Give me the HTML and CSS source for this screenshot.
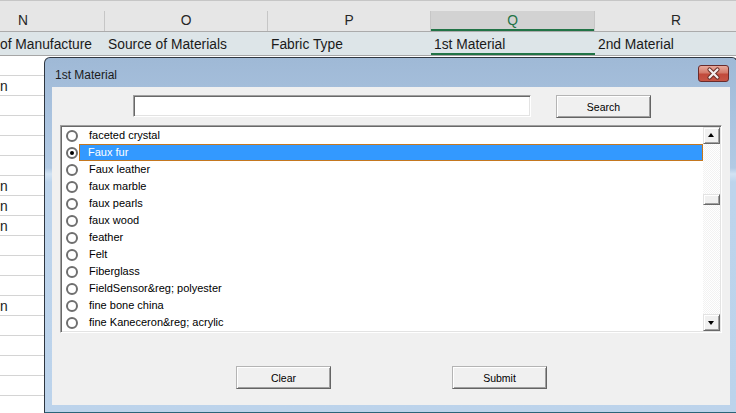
FILE: index.html
```html
<!DOCTYPE html>
<html lang="en">
<head>
    <meta charset="UTF-8">
    <meta name="viewport" content="width=device-width, initial-scale=1.0">
    <title>1st Material</title>
    <link rel="stylesheet" href="styles.css">
</head>
<body>
    <!-- Hoja de cálculo de fondo -->
    <div class="sheet">
        <div class="top-strip"></div>
        <div class="col-heads">
            <div class="col-head col-n">N</div>
            <div class="col-head">O</div>
            <div class="col-head">P</div>
            <div class="col-head active">Q</div>
            <div class="col-head">R</div>
        </div>
        <div class="title-row">
            <div class="cell col-n">of Manufacture</div>
            <div class="cell">Source of Materials</div>
            <div class="cell">Fabric Type</div>
            <div class="cell active">1st Material</div>
            <div class="cell">2nd Material</div>
        </div>
        <div class="grid-row"></div>
        <div class="grid-row">n</div>
        <div class="grid-row"></div>
        <div class="grid-row"></div>
        <div class="grid-row"></div>
        <div class="grid-row"></div>
        <div class="grid-row">n</div>
        <div class="grid-row">n</div>
        <div class="grid-row">n</div>
        <div class="grid-row"></div>
        <div class="grid-row"></div>
        <div class="grid-row"></div>
        <div class="grid-row">n</div>
        <div class="grid-row"></div>
        <div class="grid-row"></div>
        <div class="grid-row"></div>
        <div class="grid-row"></div>
        <div class="grid-row"></div>
    </div>

    <!-- Ventana del formulario -->
    <div class="dialog">
        <div class="titlebar">
            <span class="title">1st Material</span>
            <button class="close-btn" aria-label="Close">
                <svg width="31" height="17" viewBox="0 0 31 17">
                    <path d="M11.5 4.5 L19.5 12.5 M19.5 4.5 L11.5 12.5" stroke="#6b2e26" stroke-width="4.2" stroke-linecap="round"/>
                    <path d="M11.5 4.5 L19.5 12.5 M19.5 4.5 L11.5 12.5" stroke="#f4f0f0" stroke-width="2.2" stroke-linecap="round"/>
                </svg>
            </button>
        </div>
        <div class="client">
            <div class="search-row">
                <input class="search-input" type="text">
                <button class="btn">Search</button>
            </div>

            <div class="listbox">
                <ul class="options">
                    <li class="option"><span class="radio"></span><span class="label">faceted crystal</span></li>
                    <li class="option selected"><span class="radio"></span><span class="label">Faux fur</span></li>
                    <li class="option"><span class="radio"></span><span class="label">Faux leather</span></li>
                    <li class="option"><span class="radio"></span><span class="label">faux marble</span></li>
                    <li class="option"><span class="radio"></span><span class="label">faux pearls</span></li>
                    <li class="option"><span class="radio"></span><span class="label">faux wood</span></li>
                    <li class="option"><span class="radio"></span><span class="label">feather</span></li>
                    <li class="option"><span class="radio"></span><span class="label">Felt</span></li>
                    <li class="option"><span class="radio"></span><span class="label">Fiberglass</span></li>
                    <li class="option"><span class="radio"></span><span class="label">FieldSensor&amp;reg; polyester</span></li>
                    <li class="option"><span class="radio"></span><span class="label">fine bone china</span></li>
                    <li class="option"><span class="radio"></span><span class="label">fine Kaneceron&amp;reg; acrylic</span></li>
                </ul>
                <div class="scrollbar">
                    <div class="scroll-btn up"></div>
                    <div class="track"><div class="thumb"></div></div>
                    <div class="scroll-btn down"></div>
                </div>
            </div>

            <div class="button-row">
                <button class="btn">Clear</button>
                <button class="btn">Submit</button>
            </div>
        </div>
    </div>
</body>
</html>
```

FILE: styles.css
```css
body {
    margin: 0;
    width: 736px;
    height: 413px;
    overflow: hidden;
    position: relative;
    background: #fff;
    font-family: "Liberation Sans", Arial, sans-serif;
}

/* Hoja */
.sheet {
    width: 100%;
}

.top-strip {
    height: 11px;
    background: #e6e6e6;
    border-top: 1px solid #c6c6c6;
    box-sizing: border-box;
}

.col-heads {
    display: flex;
    height: 21px;
    background: #e6e6e6;
    border-bottom: 1px solid #ababab;
    box-sizing: border-box;
}

.col-head {
    flex: 0 0 163px;
    box-sizing: border-box;
    border-right: 1px solid #c6c6c6;
    text-align: center;
    font-size: 13.8px;
    line-height: 20px;
    color: #262626;
}

.col-n {
    margin-left: -58px;
}

.col-head.active {
    flex-basis: 164px;
    background: #d2d2d2;
    color: #217346;
    box-shadow: inset 0 -2px #217346;
}

.title-row {
    display: flex;
    height: 24px;
    background: #dde5e8;
    border-bottom: 1px solid #a6a6a6;
    box-sizing: border-box;
}

.cell {
    flex: 0 0 163px;
    box-sizing: border-box;
    padding-left: 3px;
    padding-top: 1px;
    font-size: 13.8px;
    line-height: 23px;
    white-space: nowrap;
    color: #1a1a1a;
}

.cell.col-n {
    padding-left: 58px;
}

.cell.active {
    flex-basis: 164px;
    box-shadow: inset 0 -2px #217346;
}

.grid-row {
    height: 20px;
    box-sizing: border-box;
    border-bottom: 1px solid #d4d4d4;
    font-size: 13.8px;
    line-height: 21px;
    color: #1a1a1a;
}

/* Ventana */
.dialog {
    position: absolute;
    left: 44px;
    top: 57px;
    width: 694px;
    height: 356px;
    box-sizing: border-box;
    border: 1px solid #2e3640;
    border-bottom-color: #2a6478;
    border-radius: 6px 6px 0 0;
    padding: 0 7px 7px;
    display: flex;
    flex-direction: column;
    background: linear-gradient(to bottom, #9fb9d6 0, #aac3df 60px, #b2cae4 110px, #d2e3f3 116px, #bdd4ec 124px, #bcd3eb 100%);
}

.titlebar {
    height: 29px;
    flex: 0 0 29px;
    display: flex;
    align-items: center;
    justify-content: space-between;
}

.title {
    padding-left: 3px;
    font-size: 12px;
    color: #1b1b1b;
    margin-top: 4px;
}

.close-btn {
    width: 31px;
    height: 17px;
    padding: 0;
    margin-right: 1px;
    margin-top: 1px;
    border: 1px solid #6a2b2b;
    border-radius: 3px;
    background: linear-gradient(to bottom, #e9aa9c 0, #d37a6a 45%, #c14a3b 55%, #c65545 100%);
    display: flex;
    align-items: center;
    justify-content: center;
    box-sizing: border-box;
}

.close-btn svg {
    display: block;
    margin: -1px;
}

.client {
    flex: 1;
    background: #f0f0f0;
    padding-top: 8px;
    font-size: 11px;
    color: #000;
}

.search-row {
    display: flex;
    gap: 25px;
    margin-left: 81px;
}

.search-input {
    width: 398px;
    height: 22px;
    box-sizing: border-box;
    margin: 0;
    padding: 0 3px;
    background: #fff;
    border: 1px solid;
    border-color: #a0a0a0 #fff #fff #a0a0a0;
    box-shadow: inset 1px 1px #696969, inset -1px -1px #e3e3e3;
    outline: none;
}

.btn {
    width: 95px;
    height: 23px;
    box-sizing: border-box;
    padding: 0;
    background: #f0f0f0;
    border: 1px solid;
    border-color: #b4b4b4 #646464 #646464 #b4b4b4;
    box-shadow: inset 1px 1px #fff, inset -1px -1px #a0a0a0;
    font-family: "Liberation Sans", Arial, sans-serif;
    font-size: 10.5px;
    color: #000;
}

.listbox {
    display: flex;
    width: 662px;
    height: 208px;
    box-sizing: border-box;
    margin: 7px 0 0 8px;
    background: #fff;
    border: 1px solid;
    border-color: #a0a0a0 #fff #fff #a0a0a0;
    box-shadow: inset 1px 1px #696969, inset -1px -1px #e3e3e3;
    padding: 1px;
}

.options {
    list-style: none;
    margin: 0;
    padding: 0;
    flex: 1;
}

.option {
    display: flex;
    align-items: center;
    height: 17px;
}

.radio {
    flex: 0 0 12px;
    width: 12px;
    height: 12px;
    box-sizing: border-box;
    margin: 0 1px 0 4px;
    border: 2px solid #6f6f6f;
    border-radius: 50%;
    background: #fff;
    position: relative;
}

.option.selected .radio::after {
    content: "";
    position: absolute;
    left: 2px;
    top: 2px;
    width: 4px;
    height: 4px;
    border-radius: 50%;
    background: #000;
}

.label {
    flex: 1;
    height: 17px;
    box-sizing: border-box;
    padding-left: 9px;
    line-height: 14px;
    white-space: nowrap;
    border: 1px solid transparent;
}

.option.selected .label {
    background: #3399ff;
    border-color: #c4771f;
    color: #fff;
    padding-left: 8px;
}

.scrollbar {
    width: 17px;
    display: flex;
    flex-direction: column;
}

.scroll-btn {
    height: 17px;
    flex: 0 0 17px;
    box-sizing: border-box;
    background: #f0f0f0;
    border: 1px solid;
    border-color: #e3e3e3 #696969 #696969 #e3e3e3;
    box-shadow: inset 1px 1px #fff, inset -1px -1px #a0a0a0;
    position: relative;
}

.scroll-btn::after {
    content: "";
    position: absolute;
    left: 4px;
    top: 5px;
    border-left: 3.5px solid transparent;
    border-right: 3.5px solid transparent;
}

.scroll-btn.up::after {
    border-bottom: 4px solid #000;
}

.scroll-btn.down::after {
    top: 6px;
    border-top: 4px solid #000;
}

.track {
    flex: 1;
    background-color: #fff;
    background-image: repeating-conic-gradient(#f2f2f2 0 25%, #fff 0 50%);
    background-size: 2px 2px;
    padding-top: 50px;
}

.thumb {
    height: 11px;
    box-sizing: border-box;
    background: #f0f0f0;
    border: 1px solid;
    border-color: #e3e3e3 #696969 #696969 #e3e3e3;
    box-shadow: inset 1px 1px #fff, inset -1px -1px #a0a0a0;
}

.button-row {
    display: flex;
    gap: 121px;
    margin: 33px 0 0 184px;
}
```
